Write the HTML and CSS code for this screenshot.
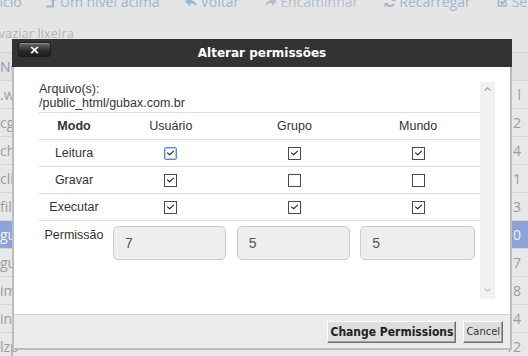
FILE: index.html
```html
<!DOCTYPE html>
<html lang="pt-BR">
<head>
    <meta charset="UTF-8">
    <title>Alterar permissões</title>
    <link rel="stylesheet" href="styles.css">
</head>
<body>

    <div class="toolbar">
        <span class="tool first">Início</span>
        <span class="tool">
            <svg viewBox="0 0 12 12"><path d="M1 10.5h7V3.5" fill="none" stroke="currentColor" stroke-width="2"/><path d="M4.5 4.5L8 0.5l3.5 4z" fill="currentColor"/></svg>
            Um nível acima
        </span>
        <span class="tool">
            <svg viewBox="0 0 12 12"><path d="M5 1L0 5.5 5 10V7.2c3.2 0 5.3 1 7 3.8-0.5-4.2-3-6.8-7-7.2z" fill="currentColor"/></svg>
            Voltar
        </span>
        <span class="tool off">
            <svg viewBox="0 0 12 12"><path d="M7 1l5 4.5L7 10V7.2c-3.2 0-5.3 1-7 3.8 0.5-4.2 3-6.8 7-7.2z" fill="currentColor"/></svg>
            Encaminhar
        </span>
        <span class="tool">
            <svg viewBox="0 0 12 12"><path d="M10 4.5A4.5 4.5 0 0 0 2 4M2 7.5A4.5 4.5 0 0 0 10 8" fill="none" stroke="currentColor" stroke-width="1.8"/><path d="M11.5 0.5v4.5H7zM0.5 11.5V7H5z" fill="currentColor"/></svg>
            Recarregar
        </span>
        <span class="tool">
            <svg viewBox="0 0 12 12"><path d="M9 6.5v3.5H1.5V2.5H8" fill="none" stroke="currentColor" stroke-width="1.6"/><path d="M3.5 5.5l2 2 5.5-5.5" fill="none" stroke="currentColor" stroke-width="2"/></svg>
            Selecionar tudo
        </span>
    </div>

    <div class="toolbar2">Esvaziar lixeira</div>

    <div class="files">
        <div class="frow head"><span class="fname">Nome</span><span class="fnum"></span></div>
        <div class="frow"><span class="fname">.well-known</span><span class="fnum red">l</span></div>
        <div class="frow"><span class="fname">cgi-bin</span><span class="fnum">12</span></div>
        <div class="frow"><span class="fname">chamados</span><span class="fnum">14</span></div>
        <div class="frow"><span class="fname">clientes</span><span class="fnum">11</span></div>
        <div class="frow"><span class="fname">filemanager</span><span class="fnum">13</span></div>
        <div class="frow sel"><span class="fname">gubax.com.br</span><span class="fnum">10</span></div>
        <div class="frow"><span class="fname">gubax.net</span><span class="fnum">17</span></div>
        <div class="frow"><span class="fname">images</span><span class="fnum">18</span></div>
        <div class="frow"><span class="fname">includes</span><span class="fnum">14</span></div>
        <div class="frow"><span class="fname">lzp</span><span class="fnum">12</span></div>
    </div>

    <div class="dialog">
        <div class="titlebar">
            <span class="close">×</span>
            <span class="title">Alterar permissões</span>
        </div>

        <div class="content">
            <div class="scrollbox">
                <div class="scroll-main">
                    <div class="file">Arquivo(s):<br>/public_html/gubax.com.br</div>

                    <table class="perm">
                        <tr>
                            <th class="mode">Modo</th>
                            <td>Usuário</td>
                            <td>Grupo</td>
                            <td>Mundo</td>
                        </tr>
                        <tr>
                            <td>Leitura</td>
                            <td><span class="cb focus"><svg viewBox="0 0 13 13"><path d="M2.5 5.5L5.5 8 10.5 3.5" fill="none" stroke="#222" stroke-width="1.3"/></svg></span></td>
                            <td><span class="cb"><svg viewBox="0 0 13 13"><path d="M2.5 5.5L5.5 8 10.5 3.5" fill="none" stroke="#222" stroke-width="1.3"/></svg></span></td>
                            <td><span class="cb"><svg viewBox="0 0 13 13"><path d="M2.5 5.5L5.5 8 10.5 3.5" fill="none" stroke="#222" stroke-width="1.3"/></svg></span></td>
                        </tr>
                        <tr>
                            <td>Gravar</td>
                            <td><span class="cb"><svg viewBox="0 0 13 13"><path d="M2.5 5.5L5.5 8 10.5 3.5" fill="none" stroke="#222" stroke-width="1.3"/></svg></span></td>
                            <td><span class="cb"></span></td>
                            <td><span class="cb"></span></td>
                        </tr>
                        <tr>
                            <td>Executar</td>
                            <td><span class="cb"><svg viewBox="0 0 13 13"><path d="M2.5 5.5L5.5 8 10.5 3.5" fill="none" stroke="#222" stroke-width="1.3"/></svg></span></td>
                            <td><span class="cb"><svg viewBox="0 0 13 13"><path d="M2.5 5.5L5.5 8 10.5 3.5" fill="none" stroke="#222" stroke-width="1.3"/></svg></span></td>
                            <td><span class="cb"><svg viewBox="0 0 13 13"><path d="M2.5 5.5L5.5 8 10.5 3.5" fill="none" stroke="#222" stroke-width="1.3"/></svg></span></td>
                        </tr>
                        <tr class="value-row">
                            <td class="label">Permissão</td>
                            <td><input class="num" type="text" value="7" readonly></td>
                            <td><input class="num" type="text" value="5" readonly></td>
                            <td><input class="num wide" type="text" value="5" readonly></td>
                        </tr>
                    </table>
                </div>

                <div class="scrollbar">
                    <svg class="arrow up" viewBox="0 0 7 4"><path d="M0.5 3.5L3.5 0.8 6.5 3.5" fill="none" stroke="#a8a8a8" stroke-width="1.2"/></svg>
                    <svg class="arrow down" viewBox="0 0 7 4"><path d="M0.5 0.5L3.5 3.2 6.5 0.5" fill="none" stroke="#c4c4c4" stroke-width="1.2"/></svg>
                </div>
            </div>
        </div>

        <div class="buttons">
            <button class="btn strong">Change Permissions</button>
            <button class="btn">Cancel</button>
        </div>
    </div>

</body>
</html>
```

FILE: styles.css
```css
body {
    margin: 0;
    width: 528px;
    height: 356px;
    overflow: hidden;
    position: relative;
    background-color: #e5e5e5;
    font-family: 'Open Sans', sans-serif;
}

/* page behind the dialog */
.toolbar {
    display: flex;
    align-items: center;
    height: 20px;
    margin: -8px 0 0 -13px;
    font-size: 14px;
    line-height: 20px;
    color: #9db5d2;
    white-space: nowrap;
}

.tool {
    display: flex;
    align-items: center;
    margin-right: 26px;
}

.tool.first {
    margin-right: 23px;
}

.tool.off {
    color: #b3bfcc;
}

.tool svg {
    width: 12px;
    height: 12px;
    margin-right: 3px;
}

.toolbar2 {
    margin: 12px 0 0 -15px;
    font-size: 13px;
    line-height: 18px;
    color: #b4b4b4;
    white-space: nowrap;
}

.files {
    margin-top: 10px;
}

.frow {
    display: flex;
    justify-content: space-between;
    height: 27px;
    border-top: 1px solid #d3d3d3;
    line-height: 27px;
    font-size: 14px;
    color: #9c9c9c;
    background-color: #e8e8e8;
    white-space: nowrap;
}

.frow.head {
    background-color: #e1e1e1;
    color: #8799b4;
}

.frow.sel {
    background-color: #8ea4d8;
    color: #eef2fa;
}

.fnum {
    padding-right: 7px;
}

.fnum.red {
    color: #b98f8f;
}

/* dialog */
.dialog {
    position: absolute;
    left: 12px;
    top: 39px;
    width: 496px;
    border: 2px solid #bcbcbc;
    border-top: 0;
    background-color: #fff;
}

.titlebar {
    position: relative;
    height: 28px;
    margin: 0 -2px;
    display: flex;
    align-items: center;
    justify-content: center;
    background-color: #333;
}

.title {
    font-family: 'DejaVu Sans', sans-serif;
    font-weight: bold;
    font-size: 12px;
    color: #fff;
}

.close {
    position: absolute;
    left: 6px;
    top: 3px;
    width: 33px;
    height: 15px;
    box-sizing: border-box;
    border: 1px solid #1c1c1c;
    border-radius: 3px;
    background: linear-gradient(#6a6a6a, #2b2b2b 60%, #1e1e1e);
    box-shadow: inset 0 1px 0 rgba(255, 255, 255, 0.25);
    color: #fff;
    font-family: 'DejaVu Sans', sans-serif;
    font-weight: bold;
    font-size: 13px;
    line-height: 13px;
    text-align: center;
}

.content {
    height: 247px;
    padding: 15px 15px 15px 25px;
    box-sizing: border-box;
}

.scrollbox {
    display: flex;
    height: 217px;
}

.scroll-main {
    flex: 1;
    font-family: 'Liberation Sans', Arial, sans-serif;
    font-size: 12.5px;
    color: #333;
}

.file {
    line-height: 14px;
    margin-bottom: 2px;
}

.scrollbar {
    width: 15px;
    display: flex;
    flex-direction: column;
    justify-content: space-between;
    align-items: center;
    background-color: #f1f1f1;
}

.arrow {
    width: 7px;
    height: 4px;
}

.arrow.up {
    margin-top: 5px;
}

.arrow.down {
    margin-bottom: 7px;
}

.perm {
    width: 100%;
    border-collapse: collapse;
    table-layout: fixed;
}

.perm td,
.perm th {
    height: 26px;
    padding: 0;
    border-top: 1px solid #ddd;
    text-align: center;
    vertical-align: middle;
    font-weight: normal;
}

.perm th.mode {
    width: 70px;
    font-weight: bold;
}

.cb {
    display: inline-block;
    width: 13px;
    height: 13px;
    box-sizing: border-box;
    border: 1px solid #4a4a4a;
    background-color: #fff;
    vertical-align: middle;
}

.cb svg {
    display: block;
    width: 11px;
    height: 11px;
}

.cb.focus {
    border-color: #4d8de6;
    border-radius: 2px;
    box-shadow: inset 0 0 0 1px #b7cff3;
}

.value-row td {
    height: 40px;
    padding-top: 5px;
    vertical-align: top;
}

.value-row td.label {
    padding-top: 7px;
}

.num {
    display: block;
    width: 113px;
    height: 34px;
    margin: 0 0 0 4px;
    padding: 0 11px;
    box-sizing: border-box;
    border: 1px solid #ccc;
    border-radius: 5px;
    background-color: #eee;
    color: #555;
    font-family: 'Liberation Sans', Arial, sans-serif;
    font-size: 14px;
    outline: none;
}

.num.wide {
    width: 115px;
}

.buttons {
    height: 33px;
    display: flex;
    align-items: center;
    justify-content: flex-end;
    gap: 7px;
    padding-right: 7px;
    border-top: 1px solid #cfcfcf;
    background-color: #ececec;
}

.btn {
    height: 22px;
    padding: 0 2px;
    border: 1px solid;
    border-color: #fff #6e6e6e #6e6e6e #fff;
    box-shadow: inset -1px -1px 0 #a3a3a3;
    background-color: #dedede;
    color: #333;
    font-family: 'DejaVu Sans Condensed', 'DejaVu Sans', sans-serif;
    font-stretch: condensed;
    font-size: 11px;
}

.btn.strong {
    font-weight: bold;
    font-size: 12px;
    color: #222;
}
```
